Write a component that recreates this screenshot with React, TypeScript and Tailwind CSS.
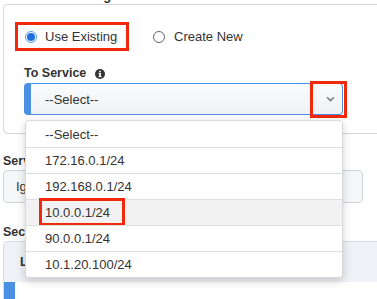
import React from "react";

const font = { fontFamily: '"Liberation Sans", Arial, sans-serif' };

function Radio({ checked }: { checked?: boolean }) {
  if (checked) {
    return (
      <div className="w-[12px] h-[12px] rounded-full border border-[#5b9be8] bg-white flex items-center justify-center shrink-0">
        <div className="w-[8px] h-[8px] rounded-full bg-[#1f6fe0]" />
      </div>
    );
  }
  return <div className="w-[12px] h-[12px] rounded-full border border-[#666] bg-white shrink-0" />;
}

const items = ["--Select--", "172.16.0.1/24", "192.168.0.1/24", "10.0.0.1/24", "90.0.0.1/24", "10.1.20.100/24"];

export default function App() {
  return (
    <div className="relative w-[377px] h-[299px] overflow-hidden bg-white text-[#333]" style={font}>
      <div className="-mt-[12px] h-[16px] pl-[62px] text-[13px] font-bold leading-[15px] whitespace-nowrap">Routing</div>

      <div className="ml-[3px] w-[420px] h-[130px] border border-[#d3d6dd] rounded-[4px]">
        <div className="flex items-center mt-[17px] ml-[11px]">
          <div className="w-[114px] h-[29px] border-[3px] border-[#f2280a] flex items-center pl-[7px]">
            <Radio checked />
            <span className="ml-[8px] text-[13px] leading-[15px] whitespace-nowrap">Use Existing</span>
          </div>
          <div className="flex items-center ml-[24px]">
            <Radio />
            <span className="ml-[9px] text-[13px] leading-[15px] whitespace-nowrap">Create New</span>
          </div>
        </div>

        <div className="flex items-center mt-[15px] ml-[20px] h-[15px]">
          <span className="text-[12.5px] font-bold leading-[15px] whitespace-nowrap">To Service</span>
          <svg className="ml-[9px]" width="10" height="10" viewBox="0 0 10 10">
            <circle cx="5" cy="5" r="5" fill="#333" />
            <rect x="4.2" y="4" width="1.7" height="4" fill="#fff" />
            <rect x="3.4" y="7.2" width="3.3" height="0.9" fill="#fff" />
            <rect x="3.4" y="4" width="1.5" height="0.9" fill="#fff" />
            <circle cx="5.05" cy="2.6" r="0.95" fill="#fff" />
          </svg>
        </div>

        <div className="relative mt-[2px] ml-[20px] w-[319px] h-[32px] border border-[#4a90e2] border-l-[7px] rounded-[4px] bg-gradient-to-b from-[#fafbfc] to-[#eff1f4] flex items-center pl-[14px] pr-[7px]">
          <span className="text-[13px] leading-[15px] flex-1">--Select--</span>
          <svg width="9" height="6" viewBox="0 0 9 6">
            <path d="M1 1.2 L4.5 4.6 L8 1.2" fill="none" stroke="#7a7a7a" strokeWidth="1.5" />
          </svg>
          <div className="absolute left-[279px] -top-[3px] w-[37px] h-[37px] border-[3px] border-[#f2280a]" />
        </div>
      </div>

      <div className="mt-[20px] ml-[3px] text-[12.5px] font-bold leading-[15px] whitespace-nowrap">Service Type</div>
      <div className="mt-[1px] ml-[3px] w-[360px] h-[33px] border border-[#d0d4da] rounded-[4px] bg-[#f6f7f9] flex items-center pl-[12px] text-[13px]">
        Ignore
      </div>

      <div className="mt-[22px] ml-[3px] text-[12.5px] font-bold leading-[15px] whitespace-nowrap">Security Rules</div>
      <div className="mt-[1px] ml-[3px] w-[400px] border border-[#d8dce3] rounded-t-[4px]">
        <div className="h-[40px] bg-[#eef1f5] flex items-center pl-[16px] text-[12.5px] font-bold">Label</div>
        <div className="flex">
          <div className="w-[11px] h-[20px] bg-[#4a90e2]" />
        </div>
      </div>

      <div className="absolute left-[25px] top-[120px] w-[318px] bg-white border border-[#d9d9d9] rounded-[4px] shadow-[0_3px_10px_rgba(0,0,0,0.18)]">
        {items.map((t, i) => (
          <div
            key={t}
            className={
              "relative h-[26px] flex items-center pl-[19px] text-[13px] leading-[15px] " +
              (i > 0 ? "border-t border-[#dedede] " : "") +
              (i === 3 ? "bg-[#f2f2f2]" : "")
            }
          >
            {t}
            {i === 3 && <div className="absolute left-[13px] -top-[2px] w-[86px] h-[28px] border-[3px] border-[#f2280a]" />}
          </div>
        ))}
      </div>
    </div>
  );
}
